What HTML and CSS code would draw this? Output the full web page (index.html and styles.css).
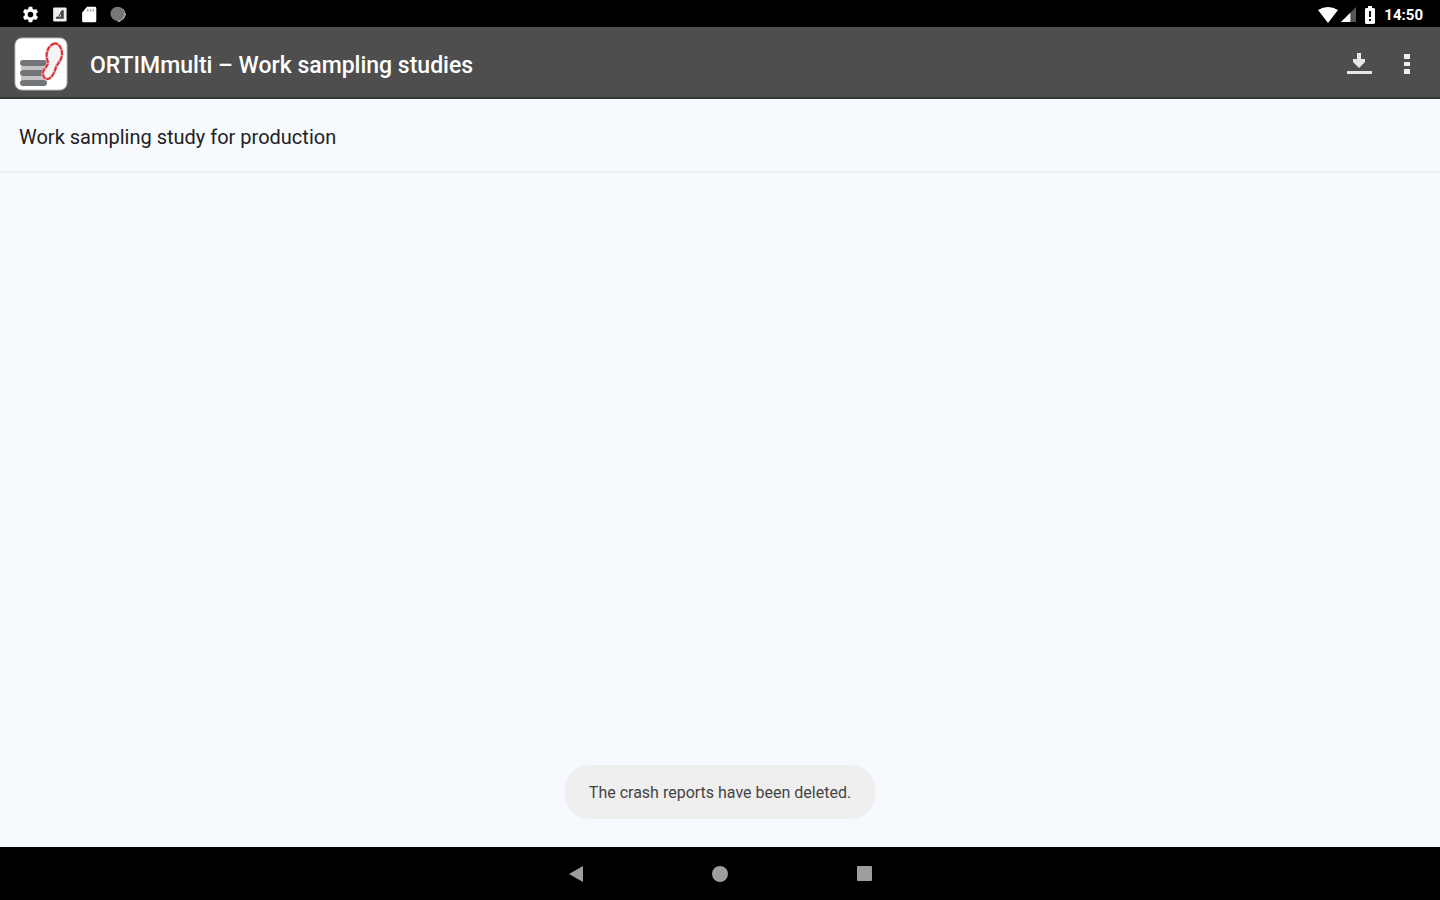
FILE: index.html
```html
<!DOCTYPE html>
<html lang="en">
<head>
    <meta charset="UTF-8">
    <meta name="viewport" content="width=device-width, initial-scale=1.0">
    <title>ORTIMmulti – Work sampling studies</title>
    <link rel="stylesheet" href="styles.css">
</head>
<body>
    <div class="status-bar">
        <div class="status-left">
            <svg class="status-icon" viewBox="0 0 24 24" aria-hidden="true">
                <path fill="#fff" fill-rule="evenodd" d="M9.5 1h5l.6 3.2 1.9 1.1 3.1-1.1 2.5 4.3-2.5 2.2v2.6l2.5 2.2-2.5 4.3-3.1-1.1-1.9 1.1-.6 3.2h-5l-.6-3.2L7 18.7l-3.1 1.1-2.5-4.3 2.5-2.200v-2.600L1.400 8.500l2.500-4.300L7 5.300l1.900-1.100zM12 8a4 4 0 1 0 0 8 4 4 0 0 0 0-8z"/>
            </svg>
            <svg class="status-icon" viewBox="0 0 24 24" aria-hidden="true">
                <rect x="3" y="2" width="19" height="20" rx="2" fill="#eee"/>
                <path fill="#444" d="M15 6h3v12H7v-3h3z"/>
                <path fill="#ccc" d="M14 11v4h-3z"/>
            </svg>
            <svg class="status-icon" viewBox="0 0 24 24" aria-hidden="true">
                <path fill="#fff" d="M10 1h11a2 2 0 0 1 2 2v18a2 2 0 0 1-2 2H5a2 2 0 0 1-2-2V9z"/>
                <path stroke="#aaa" stroke-width="2" d="M11 4v4M15 4v4M19 4v4"/>
            </svg>
            <svg class="status-icon" viewBox="0 0 24 24" aria-hidden="true">
                <path fill="#bbb" d="M13 1l8 4 3 7-3 6-7 5-8-6z"/>
                <circle cx="12" cy="11" r="10" fill="#777"/>
            </svg>
        </div>
        <div class="status-right">
            <svg class="wifi-icon" viewBox="0 0 20 16" aria-hidden="true">
                <path fill="#fff" d="M0 3Q10-3 20 3L10 16z"/>
            </svg>
            <svg class="signal-icon" viewBox="0 0 16 16" aria-hidden="true">
                <path fill="#555" d="M16 0v16H0z"/>
                <path fill="#fff" d="M10 6v10H0z"/>
            </svg>
            <svg class="battery-icon" viewBox="0 0 10 18" aria-hidden="true">
                <path fill="#fff" d="M3 0h4v2h2l1 1v14l-1 1H1l-1-1V3l1-1h2z"/>
                <path fill="#111" d="M4 5h2v6H4zM4 13h2v2H4z"/>
            </svg>
            <span class="clock">14:50</span>
        </div>
    </div>

    <header class="app-bar">
        <svg class="app-logo" viewBox="0 0 54 54" aria-hidden="true">
            <rect x="1" y="1" width="52" height="52" rx="7" fill="#fff" stroke="#bbb"/>
            <path stroke="#c4c4c4" stroke-width="4" d="M7 31h23M7 41h23"/>
            <path stroke="#737679" stroke-width="6" stroke-linecap="round" d="M9 26h21M9 36h18M9 46h21"/>
            <path fill="#f4f4f4" stroke="#f3b4b7" stroke-width="3" d="M39 7c5-2 9 3 9 10 0 6-4 9-6 13-1 4-3 9-6 11-4 3-8-1-7-6 1-4 5-5 5-10-3-6-1-15 5-18z"/>
            <path fill="none" stroke="#d8343c" stroke-width="2" stroke-dasharray="5 1" d="M39 7c5-2 9 3 9 10 0 6-4 9-6 13-1 4-3 9-6 11-4 3-8-1-7-6 1-4 5-5 5-10-3-6-1-15 5-18z"/>
        </svg>
        <h1>ORTIMmulti – Work sampling studies</h1>
        <button class="icon-button" type="button" aria-label="Download">
            <svg viewBox="0 0 28 28" aria-hidden="true">
                <path fill="#e6e6e6" d="M12 3h4v6h4v3l-6 6-6-6V9h4zM2 21h25v3H2z"/>
            </svg>
        </button>
        <button class="icon-button" type="button" aria-label="More options">
            <svg viewBox="0 0 28 28" aria-hidden="true">
                <path fill="#eee" d="M11 4h6v5h-6zM11 12h6v4h-6zM11 19h6v5h-6z"/>
            </svg>
        </button>
    </header>

    <main class="content">
        <ul class="study-list">
            <li><a href="#">Work sampling study for production</a></li>
        </ul>
        <div class="toast" role="status">The crash reports have been deleted.</div>
    </main>

    <nav class="nav-bar">
        <button type="button" aria-label="Back">
            <svg viewBox="0 0 16 16" aria-hidden="true"><path d="M15 0v16L1 8z"/></svg>
        </button>
        <button type="button" aria-label="Home">
            <svg viewBox="0 0 16 16" aria-hidden="true"><circle cx="8" cy="8" r="8"/></svg>
        </button>
        <button type="button" aria-label="Recent apps">
            <svg viewBox="0 0 16 16" aria-hidden="true"><rect x="1" y="0" width="15" height="15" rx="1"/></svg>
        </button>
    </nav>
</body>
</html>
```

FILE: styles.css
```css
* {
    box-sizing: border-box;
}

body {
    margin: 0;
    min-height: 100vh;
    display: flex;
    flex-direction: column;
    font-family: Roboto, sans-serif;
    background-color: #f6faff;
    color: #222;
}

button {
    padding: 0;
    border: none;
    background: none;
    cursor: pointer;
}

svg {
    display: block;
}

/* status bar */
.status-bar {
    display: flex;
    justify-content: space-between;
    align-items: center;
    height: 27px;
    padding: 2px 17px 0 22px;
    background-color: #000;
    color: #fff;
}

.status-left {
    display: flex;
    gap: 12px;
}

.status-right {
    display: flex;
    align-items: center;
}

.status-icon {
    width: 17px;
    height: 17px;
}

.wifi-icon {
    width: 20px;
    height: 16px;
    margin-right: 3px;
}

.signal-icon {
    width: 15px;
    height: 15px;
    margin-right: 9px;
}

.battery-icon {
    width: 10px;
    height: 18px;
    margin-right: 9px;
}

.clock {
    font-size: 15px;
    font-weight: 700;
    line-height: 24px;
}

/* app bar */
.app-bar {
    display: flex;
    align-items: center;
    gap: 20px;
    height: 72px;
    padding: 4px 19px 0 14px;
    background-color: #4e4e4e;
    border-bottom: 2px solid #343434;
}

.app-logo {
    width: 54px;
    height: 54px;
}

.app-bar h1 {
    flex: 1;
    margin: 0;
    padding: 4px 0 0 2px;
    font-size: 23px;
    font-weight: 500;
    line-height: 30px;
    color: #fff;
}

.icon-button svg {
    width: 28px;
    height: 28px;
}

/* list */
.content {
    flex: 1;
    display: flex;
    flex-direction: column;
    justify-content: space-between;
    align-items: center;
    padding-bottom: 28px;
}

.study-list {
    width: 100%;
    margin: 0;
    padding: 0;
    list-style: none;
}

.study-list a {
    display: block;
    padding: 24px 19px 20px;
    border-bottom: 2px solid #ebeff3;
    font-size: 20px;
    line-height: 28px;
    color: #222;
    text-decoration: none;
}

.toast {
    padding: 16px 24px 14px;
    border-radius: 24px;
    background-color: #efefef;
    font-size: 16px;
    line-height: 24px;
    color: #444;
}

/* navigation bar */
.nav-bar {
    display: flex;
    justify-content: center;
    align-items: center;
    gap: 128px;
    height: 53px;
    background-color: #000;
}

.nav-bar svg {
    width: 16px;
    height: 16px;
    fill: #9e9e9e;
}
```
